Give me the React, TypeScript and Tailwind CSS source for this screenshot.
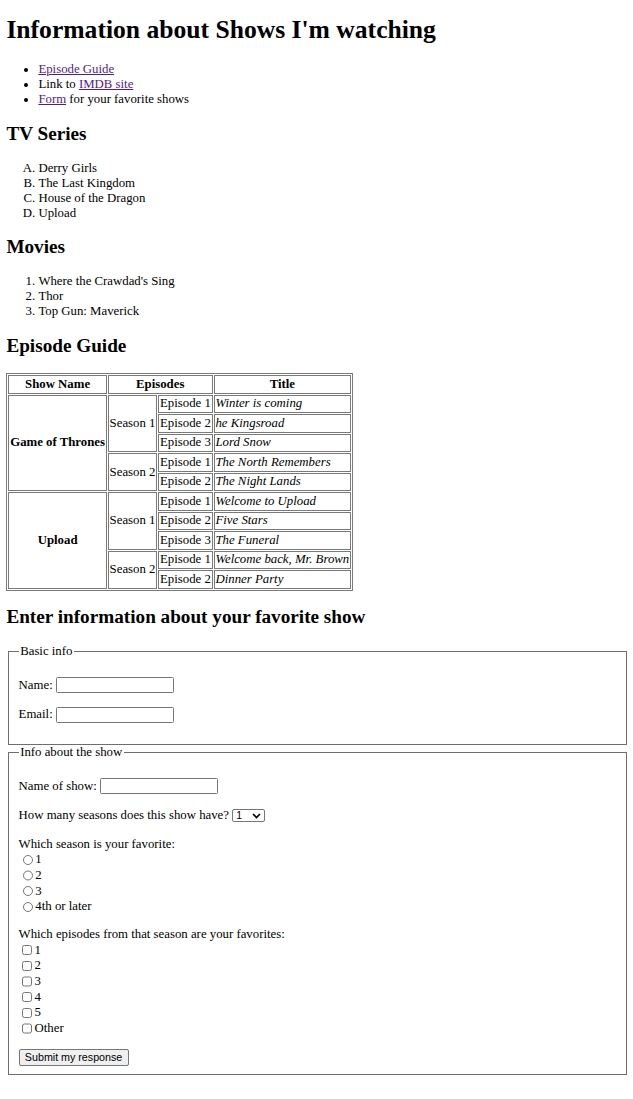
import { useState } from 'react';

const guide = [
  {
    show: 'Game of Thrones',
    seasons: [
      { name: 'Season 1', episodes: ['Winter is coming', 'he Kingsroad', 'Lord Snow'] },
      { name: 'Season 2', episodes: ['The North Remembers', 'The Night Lands'] },
    ],
  },
  {
    show: 'Upload',
    seasons: [
      { name: 'Season 1', episodes: ['Welcome to Upload', 'Five Stars', 'The Funeral'] },
      { name: 'Season 2', episodes: ['Welcome back, Mr. Brown', 'Dinner Party'] },
    ],
  },
];

const cell = 'border border-[#7a7a7a] px-[0.8px] py-[0.75px] align-middle';
const heading = 'my-[15.9px] text-[19.2px] font-bold leading-[22px]';
const textInput = 'h-[16px] w-[118px] rounded-[1.5px] border border-[#767676] bg-white';

const EpisodeTable = () => {
  const rows = guide.flatMap((entry) => {
    const showSpan = entry.seasons.reduce((n, s) => n + s.episodes.length, 0);
    return entry.seasons.flatMap((season, si) =>
      season.episodes.map((title, ei) => (
        <tr key={`${entry.show}-${season.name}-${ei}`}>
          {si === 0 && ei === 0 && (
            <th rowSpan={showSpan} className={`${cell} text-center font-bold`}>
              {entry.show}
            </th>
          )}
          {ei === 0 && (
            <td rowSpan={season.episodes.length} className={`${cell} text-left`}>
              {season.name}
            </td>
          )}
          <td className={cell}>Episode {ei + 1}</td>
          <td className={`${cell} italic`}>{title}</td>
        </tr>
      ))
    );
  });

  return (
    <table className="border-separate border-spacing-[1.6px] border border-[#7a7a7a]">
      <thead>
        <tr>
          <th className={`${cell} text-center font-bold`}>Show Name</th>
          <th colSpan={2} className={`${cell} text-center font-bold`}>
            Episodes
          </th>
          <th className={`${cell} text-center font-bold`}>Title</th>
        </tr>
      </thead>
      <tbody>{rows}</tbody>
    </table>
  );
};

const App = () => {
  const [seasons, setSeasons] = useState('1');

  return (
    <div className="bg-white pl-[6.4px] pr-[4.4px] pb-[8px] font-['Liberation_Serif','Times_New_Roman',serif] text-[12.8px] leading-[15px] text-black">
      <h1 className="mt-[14.6px] mb-[17.15px] text-[25.6px] font-bold leading-[30px]">
        Information about Shows I'm watching
      </h1>

      <ul className="my-[12.8px] list-disc pl-[32px]">
        <li>
          <a href="#guide" className="text-[#551a8b] underline">
            Episode Guide
          </a>
        </li>
        <li>
          Link to{' '}
          <a href="#imdb" className="text-[#551a8b] underline">
            IMDB site
          </a>
        </li>
        <li>
          <a href="#form" className="text-[#551a8b] underline">
            Form
          </a>{' '}
          for your favorite shows
        </li>
      </ul>

      <h2 className={heading}>TV Series</h2>
      <ol className="my-[12.8px] list-[upper-alpha] pl-[32px]">
        <li>Derry Girls</li>
        <li>The Last Kingdom</li>
        <li>House of the Dragon</li>
        <li>Upload</li>
      </ol>

      <h2 className={heading}>Movies</h2>
      <ol className="my-[12.8px] list-decimal pl-[32px]">
        <li>Where the Crawdad's Sing</li>
        <li>Thor</li>
        <li>Top Gun: Maverick</li>
      </ol>

      <h2 id="guide" className={heading}>
        Episode Guide
      </h2>
      <EpisodeTable />

      <h2 id="form" className={heading}>
        Enter information about your favorite show
      </h2>
      <form onSubmit={(e) => e.preventDefault()}>
        <fieldset className="mx-[1.6px] border border-[#6e6e6e] px-[9.6px] pt-[4.5px] pb-[8px]">
          <legend className="px-[1.6px]">Basic info</legend>
          <p className="my-[12.8px] flex h-[17px] items-center gap-[3.2px]">
            <label htmlFor="name">Name:</label>
            <input id="name" type="text" className={textInput} />
          </p>
          <p className="my-[12.8px] flex h-[17px] items-center gap-[3.2px]">
            <label htmlFor="email">Email:</label>
            <input id="email" type="email" className={textInput} />
          </p>
        </fieldset>

        <fieldset className="mx-[1.6px] border border-[#6e6e6e] px-[9.6px] pt-[4.5px] pb-[8px]">
          <legend className="px-[1.6px]">Info about the show</legend>
          <p className="my-[12.8px] flex h-[17px] items-center gap-[3.2px]">
            <label htmlFor="show">Name of show:</label>
            <input id="show" type="text" className={textInput} />
          </p>
          <p className="my-[12.8px] flex h-[17px] items-center gap-[3.2px]">
            <label htmlFor="seasons">How many seasons does this show have?</label>
            <span className="relative inline-flex">
              <select
                id="seasons"
                value={seasons}
                onChange={(e) => setSeasons(e.target.value)}
                className="h-[13px] w-[33px] appearance-none rounded-[2px] border border-[#767676] bg-white pl-[3px] font-['Liberation_Sans',Arial,sans-serif] text-[10.5px] leading-[11px]"
              >
                {['1', '2', '3', '4', '5', '6', '7', '8'].map((n) => (
                  <option key={n}>{n}</option>
                ))}
              </select>
              <svg
                className="pointer-events-none absolute right-[4px] top-[4px]"
                width="9"
                height="6"
                viewBox="0 0 9 6"
              >
                <path d="M1 1l3.5 3.5L8 1" fill="none" stroke="#000" strokeWidth="1.7" />
              </svg>
            </span>
          </p>
          <div className="my-[12.8px]">
            <div>Which season is your favorite:</div>
            {['1', '2', '3', '4th or later'].map((s) => (
              <label key={s} className="flex h-[15.6px] items-center">
                <input type="radio" name="favSeason" className="mr-[2.4px] ml-[4px] size-[10.4px]" />
                {s}
              </label>
            ))}
          </div>
          <div className="mt-[12.8px]">
            <div>Which episodes from that season are your favorites:</div>
            {['1', '2', '3', '4', '5', 'Other'].map((s) => (
              <label key={s} className="flex h-[15.7px] items-center">
                <input type="checkbox" className="mr-[2.4px] ml-[3.2px] size-[10.4px]" />
                {s}
              </label>
            ))}
          </div>
          <button
            type="submit"
            className="mt-[12.8px] h-[17px] w-[110px] rounded-[2px] border border-[#767676] bg-[#efefef] font-['Liberation_Sans',Arial,sans-serif] text-[10.7px] leading-[15px]"
          >
            Submit my response
          </button>
        </fieldset>
      </form>
    </div>
  );
};

export default App;
